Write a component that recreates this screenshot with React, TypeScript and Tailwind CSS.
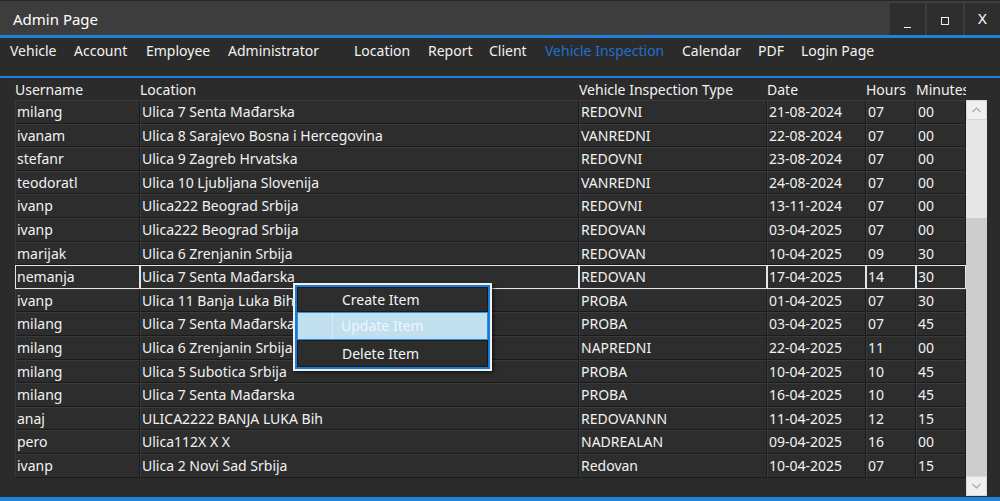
import React from "react";

type Row = {
  user: string;
  location: string;
  type: string;
  date: string;
  hours: string;
  minutes: string;
};

const rows: Row[] = [
  { user: "milang", location: "Ulica 7 Senta Mađarska", type: "REDOVNI", date: "21-08-2024", hours: "07", minutes: "00" },
  { user: "ivanam", location: "Ulica 8 Sarajevo Bosna i Hercegovina", type: "VANREDNI", date: "22-08-2024", hours: "07", minutes: "00" },
  { user: "stefanr", location: "Ulica 9 Zagreb Hrvatska", type: "REDOVNI", date: "23-08-2024", hours: "07", minutes: "00" },
  { user: "teodoratl", location: "Ulica 10 Ljubljana Slovenija", type: "VANREDNI", date: "24-08-2024", hours: "07", minutes: "00" },
  { user: "ivanp", location: "Ulica222 Beograd Srbija", type: "REDOVNI", date: "13-11-2024", hours: "07", minutes: "00" },
  { user: "ivanp", location: "Ulica222 Beograd Srbija", type: "REDOVAN", date: "03-04-2025", hours: "07", minutes: "00" },
  { user: "marijak", location: "Ulica 6 Zrenjanin Srbija", type: "REDOVAN", date: "10-04-2025", hours: "09", minutes: "30" },
  { user: "nemanja", location: "Ulica 7 Senta Mađarska", type: "REDOVAN", date: "17-04-2025", hours: "14", minutes: "30" },
  { user: "ivanp", location: "Ulica 11 Banja Luka Bih", type: "PROBA", date: "01-04-2025", hours: "07", minutes: "30" },
  { user: "milang", location: "Ulica 7 Senta Mađarska", type: "PROBA", date: "03-04-2025", hours: "07", minutes: "45" },
  { user: "milang", location: "Ulica 6 Zrenjanin Srbija", type: "NAPREDNI", date: "22-04-2025", hours: "11", minutes: "00" },
  { user: "milang", location: "Ulica 5 Subotica Srbija", type: "PROBA", date: "10-04-2025", hours: "10", minutes: "45" },
  { user: "milang", location: "Ulica 7 Senta Mađarska", type: "PROBA", date: "16-04-2025", hours: "10", minutes: "45" },
  { user: "anaj", location: "ULICA2222 BANJA LUKA Bih", type: "REDOVANNN", date: "11-04-2025", hours: "12", minutes: "15" },
  { user: "pero", location: "Ulica112X X X", type: "NADREALAN", date: "09-04-2025", hours: "16", minutes: "00" },
  { user: "ivanp", location: "Ulica 2 Novi Sad Srbija", type: "Redovan", date: "10-04-2025", hours: "07", minutes: "15" },
];

// fixed slots so each item starts where the original menu strip puts it
const menu = [
  { label: "Vehicle", cls: "w-[64px]" },
  { label: "Account", cls: "w-[72px]" },
  { label: "Employee", cls: "w-[82px]" },
  { label: "Administrator", cls: "w-[126px]" },
  { label: "Location", cls: "w-[74px]" },
  { label: "Report", cls: "w-[61px]" },
  { label: "Client", cls: "w-[56px]" },
  { label: "Vehicle Inspection", cls: "w-[137px] text-[#1f6fd1]" },
  { label: "Calendar", cls: "w-[76px]" },
  { label: "PDF", cls: "w-[43px]" },
  { label: "Login Page", cls: "" },
];

const cols = "grid grid-cols-[125px_439px_188px_99px_50px_50px]";

function Cell({ text, selected }: { text: string; selected: boolean }) {
  return (
    <div
      className={
        "h-full border pl-[1px] leading-[21px] whitespace-nowrap overflow-hidden bg-[#2d2d2d] " +
        (selected ? "border-[#e4e4e4]" : "border-t-[#3a3a3a] border-l-[#3a3a3a] border-r-[#1b1b1b] border-b-[#1b1b1b]")
      }
    >
      {text}
    </div>
  );
}

function ContextMenu() {
  return (
    <div className="absolute left-[293px] top-[205px] w-[199px] bg-[#f0f0f0] p-[2px] shadow-[2px_2px_3px_rgba(0,0,0,0.45)]">
      <div className="border-2 border-[#1a7bd6] bg-[#2b2b2b]">
        <div className="h-[25px] border border-[#1b1b1b] bg-[#2d2d2d] pl-[44px] leading-[23px] text-[#f4f4f4]">
          Create Item
        </div>
        <div className="flex h-[28px] border border-[#2b8fe0] bg-[#c1dfef] text-[#eef6fb]">
          <div className="w-[35px] border-r border-[#d7ebf6]" />
          <div className="pl-[8px] leading-[26px]">Update Item</div>
        </div>
        <div className="h-[27px] border border-[#1b1b1b] bg-[#2d2d2d] pl-[44px] leading-[25px] text-[#f4f4f4]">
          Delete Item
        </div>
      </div>
    </div>
  );
}

export default function App() {
  return (
    <div className="flex h-[501px] w-[1000px] flex-col overflow-hidden bg-[#2b2b2b] text-[14px] text-[#f2f2f2] [font-family:'Noto_Sans',sans-serif]">
      <div className="flex h-[35px] items-start border-t border-[#262626] bg-[#3d3d3d]">
        <div className="ml-[13px] mt-[8px] text-[15px] leading-[20px] text-white">Admin Page</div>
        <div className="ml-auto mt-[2px] flex gap-[2px]">
          <div className="flex h-[32px] w-[35px] items-end justify-center bg-[#2e2e2e] pb-[7px]">
            <div className="h-[1px] w-[7px] bg-white" />
          </div>
          <div className="flex h-[32px] w-[36px] items-center justify-center bg-[#2e2e2e] pt-[4px]">
            <div className="h-[8px] w-[8px] border border-[#f0f0f0]" />
          </div>
          <div className="flex h-[32px] w-[35px] items-center justify-center bg-[#2e2e2e] pb-[2px] text-[15px] text-white">
            X
          </div>
        </div>
      </div>
      <div className="h-[3px] bg-[#1e82dc]" />
      <div className="flex h-[38px] items-start bg-[#2b2b2b] pl-[10px] pt-[2px] text-[14px] leading-[22px] whitespace-nowrap">
        {menu.map((m) => (
          <span key={m.label} className={"shrink-0 " + m.cls}>
            {m.label}
          </span>
        ))}
      </div>
      <div className="h-[2px] bg-[#1e82dc]" />
      <div className="relative flex flex-1 pl-[15px]">
        <div className="flex flex-col">
          <div className={cols + " h-[22px] items-end leading-[20px]"}>
            <div>Username</div>
            <div>Location</div>
            <div>Vehicle Inspection Type</div>
            <div>Date</div>
            <div>Hours</div>
            <div className="overflow-hidden whitespace-nowrap">Minutes</div>
          </div>
          {rows.map((r, i) => (
            <div key={i} className={cols + " h-[23.6px]"}>
              <Cell text={r.user} selected={i === 7} />
              <Cell text={r.location} selected={i === 7} />
              <Cell text={r.type} selected={i === 7} />
              <Cell text={r.date} selected={i === 7} />
              <Cell text={r.hours} selected={i === 7} />
              <Cell text={r.minutes} selected={i === 7} />
            </div>
          ))}
        </div>
        <div className="mt-[22px] flex h-[396px] w-[21px] flex-col bg-[#cdcdcd]">
          <div className="flex h-[20px] items-center justify-center border border-[#d9d9d9] bg-[#f0f0f0] text-[#a8a8a8]">
            <svg width="9" height="6" viewBox="0 0 9 6" fill="none" stroke="currentColor" strokeWidth="1.2">
              <path d="M0.5 5L4.5 1L8.5 5" />
            </svg>
          </div>
          <div className="h-[98px] bg-[#e6e6e6]" />
          <div className="flex-1" />
          <div className="flex h-[20px] items-center justify-center border border-[#d9d9d9] bg-[#f0f0f0] text-[#a8a8a8]">
            <svg width="9" height="6" viewBox="0 0 9 6" fill="none" stroke="currentColor" strokeWidth="1.2">
              <path d="M0.5 1L4.5 5L8.5 1" />
            </svg>
          </div>
        </div>
        <ContextMenu />
      </div>
      <div className="h-[4px] bg-[#1e82dc]" />
    </div>
  );
}
